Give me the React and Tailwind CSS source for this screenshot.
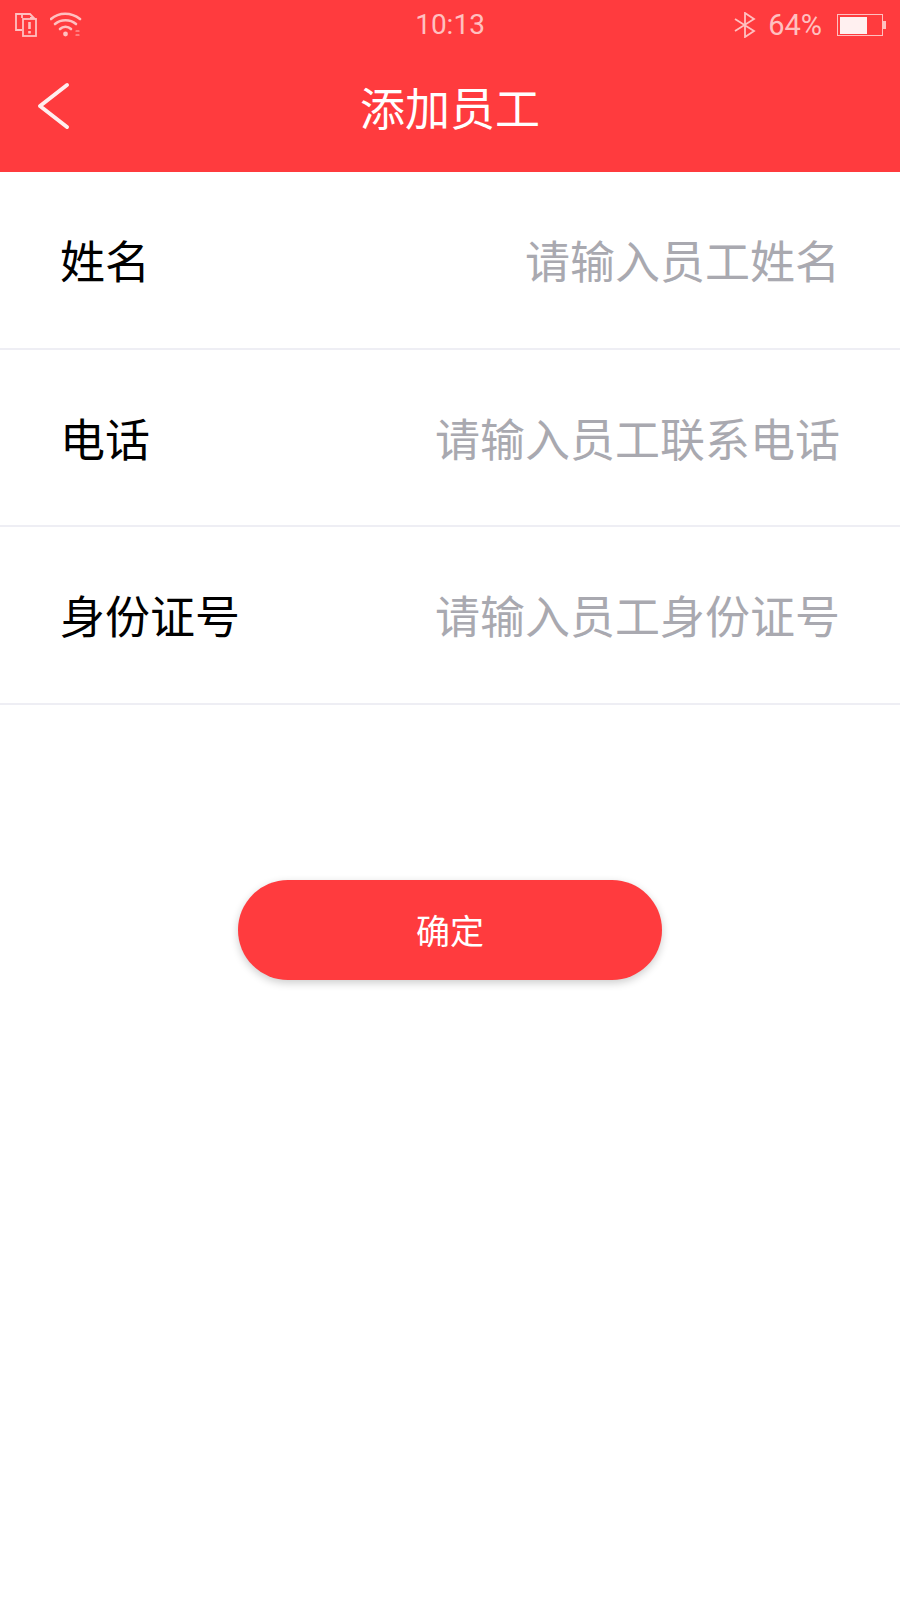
import React from 'react';

const font = "font-['Noto_Sans_CJK_SC','Noto_Sans',sans-serif]";

const rows = [
    { label: '姓名', placeholder: '请输入员工姓名' },
    { label: '电话', placeholder: '请输入员工联系电话' },
    { label: '身份证号', placeholder: '请输入员工身份证号' },
];

const StatusBar = () => (
    <div className="flex h-[50px] items-center pl-[14px] pr-[14px] text-[#ffc0c0]">
        <div className="flex flex-1 items-center gap-[12px]">
            <svg width="24" height="26" viewBox="0 0 24 26" fill="none" stroke="currentColor" strokeWidth="1.8">
                <path d="M8 6V2h8l4 4h-4" />
                <path d="M8 18H2V2h6" />
                <rect x="9" y="7" width="13" height="17" />
                <path d="M15.5 10v7M15.5 19v2.5" strokeWidth="2.6" />
            </svg>
            <svg width="32" height="26" viewBox="0 0 32 26" fill="none" stroke="currentColor" strokeWidth="2.6" strokeLinecap="round">
                <path d="M1 7c8-7 20-7 29 0" />
                <path d="M5 12c6-5 15-5 21 0" />
                <path d="M10 17c3-3 8-3 11 0" />
                <circle cx="15.5" cy="22" r="2.4" fill="currentColor" stroke="none" />
                <path d="M26 19h3M26 23h3" strokeWidth="1.2" />
            </svg>
        </div>
        <span className="font-['Roboto',sans-serif] text-[28px] leading-none">10:13</span>
        <div className="flex flex-1 items-center justify-end">
            <svg width="22" height="26" viewBox="0 0 22 26" fill="none" stroke="currentColor" strokeWidth="1.8">
                <path d="M1 7l19 12-9 6V1l9 6L1 19" />
            </svg>
            <span className="ml-[12px] font-['Roboto',sans-serif] text-[29px] leading-none">64%</span>
            <div className="ml-[15px] flex items-center">
                <div className="h-[22px] w-[46px] border-[1.5px] border-[#ffc0c0] p-[1.5px]">
                    <div className="h-full w-[27px] bg-[#fff0f0]" />
                </div>
                <div className="h-[8px] w-[3px] bg-[#ffc0c0]" />
            </div>
        </div>
    </div>
);

const Header = () => (
    <div className="bg-[#ff3b3e]">
        <StatusBar />
        <div className="relative flex h-[122px] items-center justify-center pb-[10px]">
            <svg className="absolute left-[37px] top-[32px]" width="34" height="48" viewBox="0 0 34 48" fill="none" stroke="#ffeeee" strokeWidth="4" strokeLinecap="round" strokeLinejoin="round">
                <path d="M30 3L3 24l27 21" />
            </svg>
            <span className="text-[45px] leading-none text-white">添加员工</span>
        </div>
    </div>
);

export default function App() {
    return (
        <div className={`min-h-[1600px] bg-white ${font}`}>
            <Header />
            {rows.map((row) => (
                <div key={row.label} className="flex h-[177.5px] items-center justify-between border-b-2 border-[#eeeef4] pl-[60px] pr-[60px]">
                    <span className="text-[45px] leading-none text-black">{row.label}</span>
                    <span className="text-[45px] leading-none text-[#a9a9b0]">{row.placeholder}</span>
                </div>
            ))}
            <div className="mt-[175px] flex justify-center">
                <button className="h-[100px] w-[424px] rounded-full bg-[#ff3b3e] text-[34px] text-white shadow-[0_3px_8px_rgba(0,0,0,0.2)]">确定</button>
            </div>
        </div>
    );
}
